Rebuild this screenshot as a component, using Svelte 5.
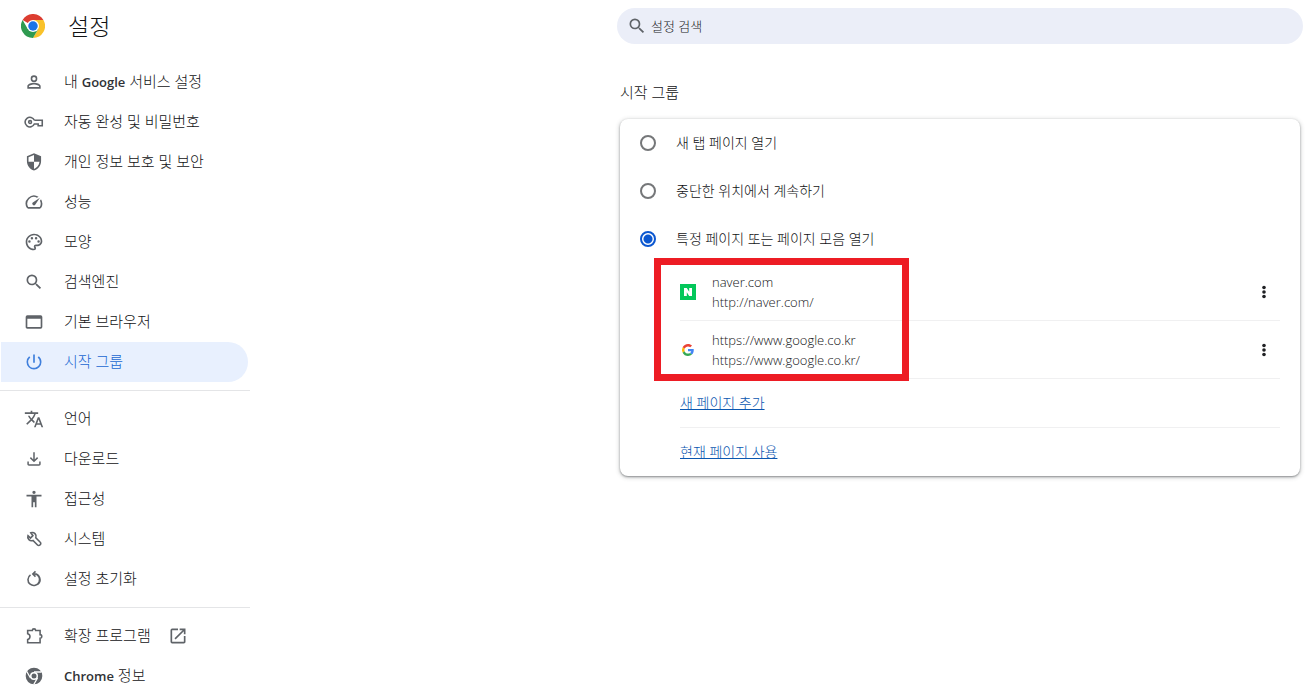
<script>
  const icons = {
    person: 'M12 5.9a2.1 2.1 0 1 1 0 4.2 2.1 2.1 0 0 1 0-4.2m0 9c2.97 0 6.1 1.46 6.1 2.1v1.1H5.9V17c0-.64 3.13-2.1 6.1-2.1M12 4a4 4 0 1 0 0 8 4 4 0 0 0 0-8zm0 9c-2.67 0-8 1.34-8 4v3h16v-3c0-2.66-5.33-4-8-4z',
    shield: 'M12 1.5L3.5 5.2v5.7c0 5.3 3.6 10.2 8.5 11.4 4.9-1.2 8.5-6.1 8.5-11.4V5.2L12 1.5zm0 10.3h6.6c-.5 4-3.1 7.4-6.6 8.5v-8.5H5.4V6.4L12 3.5v8.3z',
    speed: 'M20.38 8.57l-1.23 1.85a8 8 0 0 1-.22 7.58H5.07A8 8 0 0 1 15.58 6.85l1.85-1.23A10 10 0 0 0 3.35 19a2 2 0 0 0 1.72 1h13.85a2 2 0 0 0 1.74-1 10 10 0 0 0-.27-10.44zM10.59 15.41a2 2 0 0 0 2.83 0l5.66-8.49-8.49 5.66a2 2 0 0 0 0 2.83z',
    palette: 'M12 22C6.49 22 2 17.51 2 12S6.49 2 12 2s10 4.04 10 9c0 3.31-2.69 6-6 6h-1.77c-.28 0-.5.22-.5.5 0 .12.05.23.13.33.41.47.64 1.06.64 1.67A2.5 2.5 0 0 1 12 22zm0-18c-4.41 0-8 3.59-8 8s3.59 8 8 8c.28 0 .5-.22.5-.5a.54.54 0 0 0-.14-.35c-.41-.46-.63-1.05-.63-1.65a2.5 2.5 0 0 1 2.5-2.5H16c2.21 0 4-1.79 4-4 0-3.86-3.59-7-8-7zM6.5 10a1.5 1.5 0 1 0 0 3 1.5 1.5 0 0 0 0-3zM9.5 6a1.5 1.5 0 1 0 0 3 1.5 1.5 0 0 0 0-3zM14.5 6a1.5 1.5 0 1 0 0 3 1.5 1.5 0 0 0 0-3zM17.5 10a1.5 1.5 0 1 0 0 3 1.5 1.5 0 0 0 0-3z',
    search: 'M15.5 14h-.79l-.28-.27A6.471 6.471 0 0 0 16 9.5 6.5 6.5 0 1 0 9.5 16c1.61 0 3.09-.59 4.23-1.57l.27.28v.79l5 4.99L20.49 19l-4.99-5zm-6 0C7.01 14 5 11.99 5 9.5S7.01 5 9.5 5 14 7.01 14 9.5 11.99 14 9.5 14z',
    browser: 'M20 4H4a2 2 0 0 0-2 2v12c0 1.1.9 2 2 2h16a2 2 0 0 0 2-2V6a2 2 0 0 0-2-2zm0 14H4V8h16v10z',
    power: 'M13 3h-2v10h2V3zm4.83 2.17l-1.42 1.42A6.92 6.92 0 0 1 19 12c0 3.87-3.13 7-7 7A6.995 6.995 0 0 1 7.58 6.58L6.17 5.17A8.932 8.932 0 0 0 3 12a9 9 0 0 0 18 0c0-2.74-1.23-5.18-3.17-6.83z',
    language: 'M12.87 15.07l-2.54-2.51.03-.03A17.52 17.52 0 0 0 14.07 6H17V4h-7V2H8v2H1v1.99h11.17C11.5 7.92 10.44 9.75 9 11.35 8.07 10.32 7.3 9.19 6.69 8h-2c.73 1.63 1.73 3.17 2.98 4.56l-5.09 5.02L4 19l5-5 3.11 3.11.76-2.04zM18.5 10h-2L12 22h2l1.12-3h4.75L21 22h2l-4.5-12zm-2.62 7l1.62-4.33L19.12 17h-3.24z',
    download: 'M18.2 15v3.2H5.8V15H4v3c0 1.1.9 2 2 2h12c1.1 0 2-.9 2-2v-3h-1.8zM17 11l-1.27-1.27-2.83 2.83V4h-1.8v8.56L8.27 9.73 7 11l5 5 5-5z',
    access: 'M12 2a2 2 0 1 1 0 4 2 2 0 0 1 0-4zm9 7h-6v13h-2v-6h-2v6H9V9H3V7h18v2z',
    open: 'M19 19H5V5h7V3H5a2 2 0 0 0-2 2v14a2 2 0 0 0 2 2h14c1.1 0 2-.9 2-2v-7h-2v7zM14 3v2h3.59l-9.83 9.83 1.41 1.41L19 6.41V10h2V3h-7z'
  };

  const lineIcons = {
    key: 'M12.4 9.8A5.8 5.8 0 1 0 12.4 14.400H14.800M12.400 9.800H21.900V16.500H17V14.400H14.800M9 12a1.700 1.700 0 1 1-3.400 0 1.700 1.700 0 0 1 3.400 0z',
    system: 'M8.2 4.6a4.6 4.6 0 0 1 6 6l5.3 5.3a2 2 0 0 1 0 2.9l-.4.4a2 2 0 0 1-2.9 0l-5.4-5.4a4.6 4.6 0 0 1-6-5.9l3 3 2.9-2.9-2.5-3.4z',
    reset: 'M7.8 7a7 7 0 1 0 4.6-1.2 7 7 0 0 1 4 12.600M13.800 2.800L10.600 6l3.200 3.200',
    extension: 'M4.400 5.300H10a2 1.900 0 0 1 4 0H19.300V10.300a2 2.200 0 0 1 0 4.400V20H4.400V16.200a3.600 3.600 0 0 0 0-7z'
  };

  const groups = [
    [
      { icon: 'person', label: '내 ', latin: 'Google', rest: ' 서비스 설정' },
      { icon: 'key', label: '자동 완성 및 비밀번호' },
      { icon: 'shield', label: '개인 정보 보호 및 보안' },
      { icon: 'speed', label: '성능' },
      { icon: 'palette', label: '모양' },
      { icon: 'search', label: '검색엔진' },
      { icon: 'browser', label: '기본 브라우저' },
      { icon: 'power', label: '시작 그룹', active: true }
    ],
    [
      { icon: 'language', label: '언어' },
      { icon: 'download', label: '다운로드' },
      { icon: 'access', label: '접근성' },
      { icon: 'system', label: '시스템' },
      { icon: 'reset', label: '설정 초기화' }
    ],
    [
      { icon: 'extension', label: '확장 프로그램', external: true },
      { icon: 'chrome', label: '', latin: 'Chrome', rest: ' 정보' }
    ]
  ];

  const options = ['새 탭 페이지 열기', '중단한 위치에서 계속하기', '특정 페이지 또는 페이지 모음 열기'];
  let selected = $state(2);

  const pages = [
    { site: 'naver', title: 'naver.com', url: 'http://naver.com/' },
    { site: 'google', title: 'https://www.google.co.kr', url: 'https://www.google.co.kr/' }
  ];
</script>

{#snippet icon(name)}
  <svg class="icon" viewBox="0 0 24 24" aria-hidden="true">
    {#if name === 'chrome'}
      <circle cx="12" cy="12" r="10" />
      <circle class="gap" cx="12" cy="12" r="4.8" />
      <path class="gap-line" d="M12 7.2h9M7.8 14.4L3.3 6.6M16.2 14.4l-4.5 7.8" />
      <circle cx="12" cy="12" r="3" />
    {:else if lineIcons[name]}
      <path class="line" d={lineIcons[name]} />
    {:else}
      <path fill-rule="evenodd" d={icons[name]} />
    {/if}
  </svg>
{/snippet}

<div class="page">
  <aside>
    <header>
      <svg class="logo" viewBox="0 0 48 48" aria-hidden="true">
        <path fill="#dc3d30" d="M24 24L3.2 12A24 24 0 0 1 44.8 12z" />
        <path fill="#f9c22a" d="M24 24V12h20.8A24 24 0 0 1 24 48l10.4-18z" />
        <path fill="#2f9a50" d="M24 24l10.4 6L24 48A24 24 0 0 1 3.2 12l10.4 18z" />
        <circle cx="24" cy="24" r="12" fill="#fff" />
        <circle cx="24" cy="24" r="9.5" fill="#1a73e8" />
      </svg>
      <h1>설정</h1>
    </header>
    <nav>
      {#each groups as group}
        <ul>
          {#each group as item}
            <li>
              <a href="#settings" class:active={item.active}>
                {@render icon(item.icon)}
                <span>{item.label}{#if item.latin}<b>{item.latin}</b>{item.rest}{/if}</span>
                {#if item.external}{@render icon('open')}{/if}
              </a>
            </li>
          {/each}
        </ul>
      {/each}
    </nav>
  </aside>

  <main>
    <label class="search">
      {@render icon('search')}
      <input type="search" placeholder="설정 검색" aria-label="설정 검색" />
    </label>

    <section>
      <h2>시작 그룹</h2>
      <div class="card">
        {#each options as option, i}
          <label class="option">
            <input type="radio" name="startup" value={i} bind:group={selected} />
            <span>{option}</span>
          </label>
        {/each}

        <div class="details">
          <div class="sites">
            {#each pages as page}
              <div class="site row">
                {#if page.site === 'naver'}
                  <svg class="favicon" viewBox="0 0 16 16" aria-hidden="true">
                    <path fill="#03c75a" d="M0 0h16v16H0z" />
                    <path fill="#fff" d="M4 4h2.8l2.4 3.7V4H12v8H9.2L6.8 8.3V12H4z" />
                  </svg>
                {:else}
                  <svg class="favicon" viewBox="-8 -8 64 64" aria-hidden="true">
                    <path fill="#ea4335" d="M24 9.5c3.54 0 6.71 1.22 9.21 3.6l6.85-6.85C35.9 2.38 30.47 0 24 0 14.62 0 6.51 5.38 2.56 13.22l7.98 6.19C12.43 13.72 17.74 9.5 24 9.5z" />
                    <path fill="#4285f4" d="M46.98 24.55c0-1.57-.15-3.09-.38-4.55H24v9.02h12.94c-.58 2.96-2.26 5.48-4.78 7.18l7.73 6c4.51-4.18 7.09-10.36 7.09-17.65z" />
                    <path fill="#fbbc05" d="M10.53 28.59a14.5 14.5 0 0 1 0-9.18l-7.98-6.19a24 24 0 0 0 0 21.56l7.98-6.19z" />
                    <path fill="#34a853" d="M24 48c6.48 0 11.93-2.13 15.89-5.81l-7.73-6c-2.15 1.45-4.92 2.3-8.16 2.3-6.26 0-11.57-4.22-13.47-9.91l-7.98 6.19C6.51 42.62 14.62 48 24 48z" />
                  </svg>
                {/if}
                <div class="address">
                  <div>{page.title}</div>
                  <div class="url">{page.url}</div>
                </div>
                <button class="more" aria-label={page.title}>
                  <svg viewBox="0 0 20 20" aria-hidden="true">
                    <circle cx="10" cy="5" r="2" /><circle cx="10" cy="10" r="2" /><circle cx="10" cy="15" r="2" />
                  </svg>
                </button>
              </div>
            {/each}
            <div class="highlight"></div>
          </div>
          <div class="row action"><a href="#add">새 페이지 추가</a></div>
          <div class="row action"><a href="#current">현재 페이지 사용</a></div>
        </div>
      </div>
    </section>
  </main>
</div>

<style>
  :global(body) {
    margin: 0;
    background: #fff;
  }
  .page {
    display: grid;
    grid-template-columns: 250px minmax(0, 1fr);
    font-family: "Open Sans", "Noto Sans CJK KR", sans-serif;
    font-size: 13px;
    font-weight: 300;
    color: #111214;
  }
  header {
    display: flex;
    align-items: center;
    gap: 23px;
    height: 52px;
    padding-left: 21px;
    margin-bottom: 10px;
  }
  .logo {
    width: 24px;
    height: 24px;
  }
  h1 {
    margin: 0;
    font-size: 23px;
    font-weight: 300;
    line-height: 32px;
  }
  ul {
    margin: 0;
    padding: 0;
    list-style: none;
  }
  ul + ul {
    margin-top: 8px;
    padding-top: 8px;
    border-top: 1px solid #e4e5e7;
  }
  nav a {
    display: flex;
    align-items: center;
    height: 40px;
    margin: 0 2px 0 1px;
    padding-left: 23px;
    border-radius: 0 20px 20px 0;
    color: #111214;
    font-size: 15px;
    line-height: 20px;
    text-decoration: none;
  }
  nav span {
    margin: 0 17px 0 20px;
    padding-bottom: 2px;
  }
  nav b {
    color: #303236;
    font-size: 13px;
    font-weight: 600;
  }
  nav a.active {
    background: #e8f0fe;
    color: #1967d2;
  }
  .icon {
    flex: none;
    width: 20px;
    height: 20px;
    fill: #5f6368;
  }
  .active .icon {
    fill: #3f7fdc;
  }
  .line {
    fill: none;
    stroke: #5f6368;
    stroke-width: 1.9;
  }
  .gap {
    fill: #fff;
  }
  .gap-line {
    fill: none;
    stroke: #fff;
    stroke-width: 1.6;
  }
  main {
    width: min(686px, 100%);
    box-sizing: border-box;
    margin: 8px 4px 0 auto;
    justify-self: end;
  }
  .search {
    display: flex;
    align-items: center;
    gap: 4px;
    height: 36px;
    padding: 0 16px 0 10px;
    border-radius: 18px;
    background: #ebeef8;
  }
  .search input {
    flex: 1;
    min-width: 0;
    padding: 0;
    border: 0;
    outline: 0;
    background: none;
    font: inherit;
    line-height: 20px;
  }
  .search input::placeholder {
    color: #202124;
    opacity: 1;
  }
  section {
    padding: 0 3px;
  }
  h2 {
    margin: 0;
    padding: 38px 0 17px;
    font-size: 15px;
    font-weight: 300;
    line-height: 20px;
  }
  .card {
    border-radius: 8px;
    background: #fff;
    box-shadow: 0 1px 2px rgba(60, 64, 67, 0.5), 0 1px 4px 1px rgba(60, 64, 67, 0.2);
  }
  .option {
    display: flex;
    align-items: center;
    gap: 20px;
    height: 48px;
    padding: 0 20px;
    font-size: 14px;
    line-height: 20px;
  }
  .option input {
    appearance: none;
    box-sizing: border-box;
    width: 16px;
    height: 16px;
    margin: 0;
    border: 2px solid #757779;
    border-radius: 50%;
  }
  .option input:checked {
    border-color: #0b57d0;
    background: radial-gradient(circle, #0b57d0 4px, #fff 5px);
  }
  .details {
    padding: 0 20px 0 60px;
  }
  .sites {
    position: relative;
  }
  .row {
    display: flex;
    align-items: center;
    border-bottom: 1px solid #f0f0f1;
  }
  .site {
    height: 57px;
  }
  .favicon {
    flex: none;
    width: 16px;
    height: 16px;
    margin-right: 16px;
  }
  .address {
    flex: 1;
    line-height: 20px;
  }
  .url {
    color: #202124;
  }
  .more {
    display: grid;
    place-items: center;
    width: 32px;
    height: 32px;
    padding: 0;
    border: 0;
    background: none;
  }
  .more svg {
    width: 18px;
    height: 18px;
    fill: #202124;
  }
  .highlight {
    position: absolute;
    top: -5px;
    left: -26px;
    box-sizing: border-box;
    width: 255px;
    height: 123px;
    border: 7px solid #ed1c24;
    pointer-events: none;
  }
  .action {
    height: 48px;
  }
  .action:last-child {
    border: 0;
  }
  .action a {
    color: #0b57b0;
    font-size: 14px;
    line-height: 20px;
    text-underline-offset: 1px;
  }
</style>
